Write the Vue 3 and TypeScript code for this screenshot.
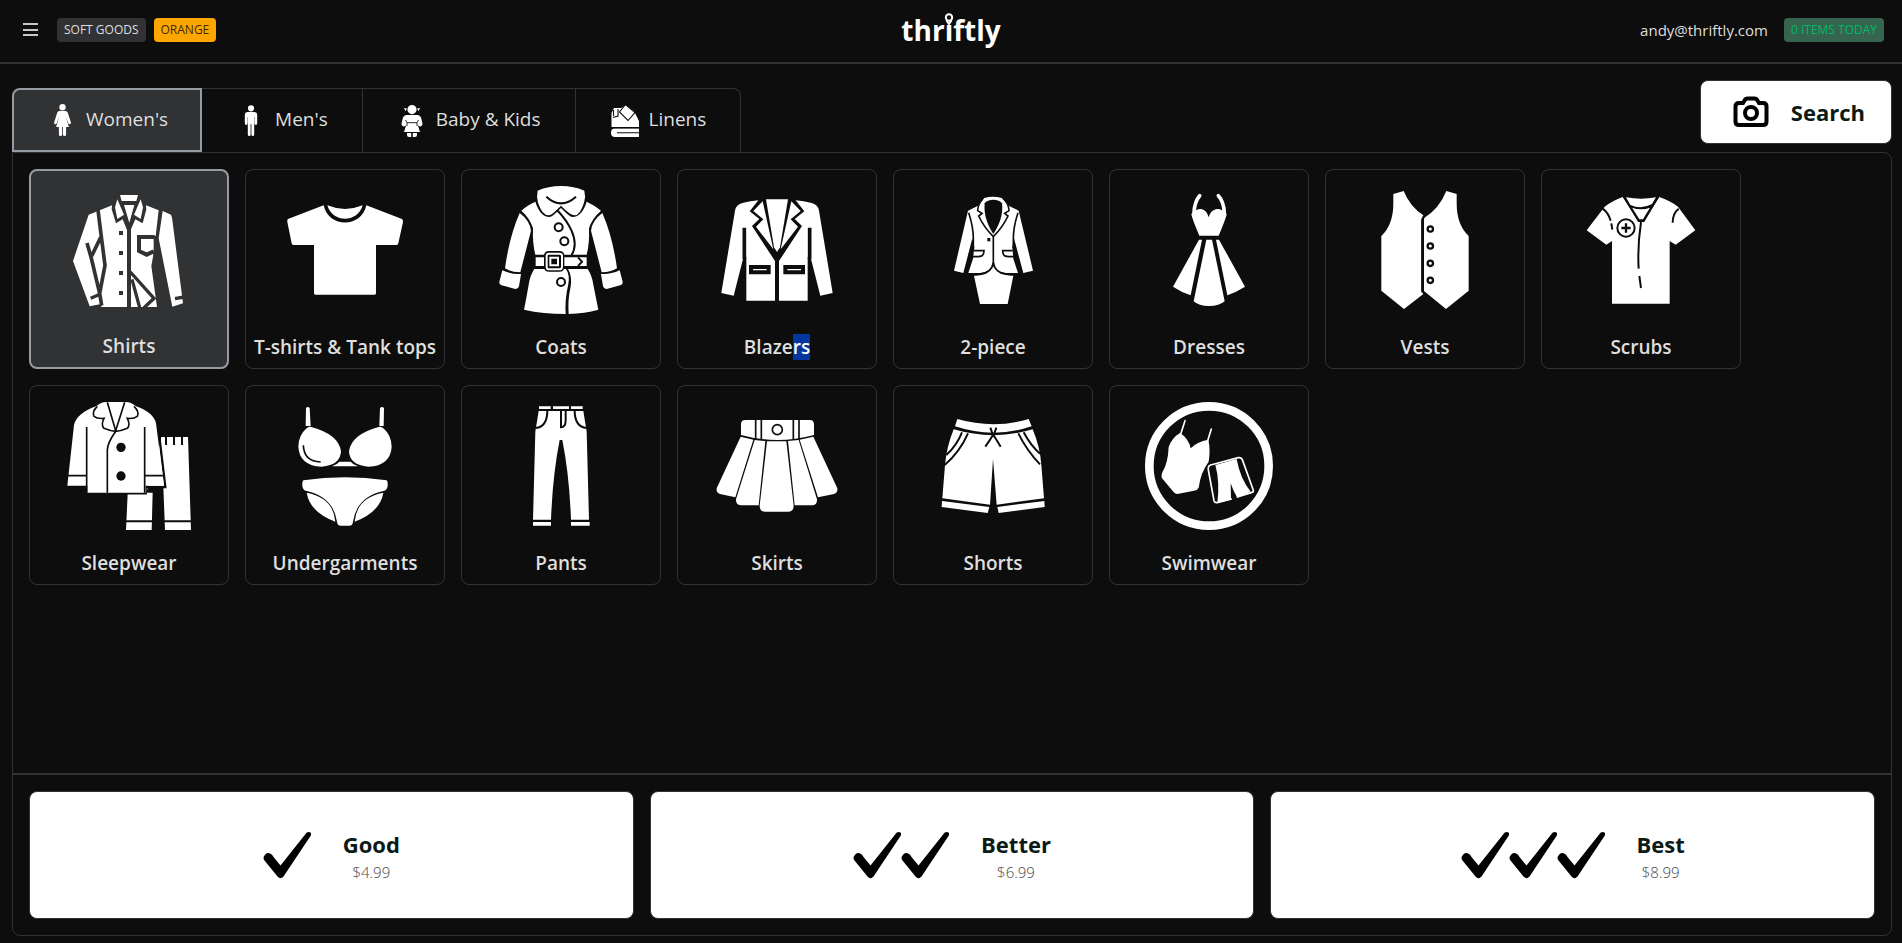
<script setup lang="ts">
import { ref } from 'vue'

type Kind = 'fill' | 'cut' | 'gap' | 'line'
interface Shape { k: Kind; d: string; w?: number }
interface Category { name: string; box: string; shapes: Shape[]; picked?: string }
interface Tab { name: string; shapes: Shape[] }
interface Grade { name: string; price: string; ticks: number }

const fill = (d: string): Shape => ({ k: 'fill', d })
const cut = (d: string): Shape => ({ k: 'cut', d })
const gap = (w: number, d: string): Shape => ({ k: 'gap', d, w })
const line = (w: number, d: string): Shape => ({ k: 'line', d, w })
const disc = (x: number, y: number, r: number) =>
  `M${x - r} ${y}a${r} ${r} 0 1 0 ${2 * r} 0a${r} ${r} 0 1 0 ${-2 * r} 0Z`

const tabs: Tab[] = [
  {
    name: "Women's",
    shapes: [
      fill(disc(16.5, 3.3, 3.2)),
      fill('M13.5 7H19.5Q21.3 7 21.9 9L24.9 18.4Q25.1 20 23.9 20.3Q22.8 20.4 22.3 19.2L19.7 12.6L22.9 23H10.1L13.3 12.6L10.7 19.2Q10.2 20.4 9.1 20.3Q7.9 20 8.1 18.4L11.1 9Q11.7 7 13.5 7Z'),
      fill('M12.9 23H16.1V30.5Q16.1 32 14.5 32T12.9 30.5ZM16.9 23H20.1V30.5Q20.1 32 18.5 32T16.9 30.5Z'),
    ],
  },
  {
    name: "Men's",
    shapes: [
      fill(disc(16, 3.3, 3.1)),
      fill('M13 7H19Q22.2 7 22.2 10V18Q22.2 20 20.8 20T19.5 18V12H19.2V29.5Q19.2 31 17.8 31T16.4 29.5V19H15.6V29.5Q15.6 31 14.2 31T12.8 29.5V12H12.5V18Q12.5 20 11.2 20T9.8 18V10Q9.8 7 13 7Z'),
    ],
  },
  {
    name: 'Baby & Kids',
    shapes: [
      fill(disc(16, 4.6, 4.6)),
      fill('M8 3L11 3.6L9.5 6.2ZM24 3L21 3.6L22.5 6.2Z'),
      fill('M10.5 10H21.5Q24 10 25 12.5L26.4 18Q26.8 21 24.4 21.4L22 20.6L24 27H8L10 20.6L7.6 21.4Q5.2 21 5.6 18L7 12.5Q8 10 10.5 10Z'),
      fill('M11 28H15.2V32H13Q11 32 11 30ZM16.8 28H21V30Q21 32 19 32H16.8Z'),
      gap(0.9, 'M9.5 15L11 17.5V21M22.5 15L21 17.5V21M11 17.7H21'),
    ],
  },
  {
    name: 'Linens',
    shapes: [
      fill('M2.5 8L5 3H12L17 0L25 6L30 16V22H2.5Z'),
      fill('M6 23.5H30V32H6Q2 32 2 27.7T6 23.5Z'),
      gap(1.1, 'M1 22.8H31M8 27.8H30M4 12.5L9 11V4M4.5 5V11M16.5 -0.5L26 7.5L19 15.5L10.5 7Z'),
    ],
  },
]

const categories: Category[] = [
  {
    name: 'Shirts',
    box: '165 78 384 384',
    shapes: [
      fill('M236 164L306 136H408L446 151L437 228L429 290L424 318L441 441H273L277 431L239 439L189 303Z'),
      fill('M458 153L483 164Q486 170 487 180L519 430L487 440L446 235Z'),
      cut('M306 136L322 114H392L408 136L409 148L398 190L376 178L363 208V441H351V210L338 178L318 190L305 148Z'),
      fill('M330 105H384L379 123H335ZM322 118L342 164L322 177L315 142ZM392 118L372 164L392 177L399 142ZM342 135H373L358 188Z'),
      gap(11, 'M264 150L274 230L285 316L269 400L275 437M231 249L244 295L269 400M245 288L272 232'),
      gap(10, 'M242 415L270 403M495 416L522 411'),
      cut('M327 213h12v12h-12ZM327 273h12v12h-12ZM327 333h12v12h-12ZM327 393h12v12h-12Z'),
      gap(12, 'M434 231H387V273L410 284L431 274'),
      gap(10, 'M436 228V290'),
      gap(10, 'M361 336L432 415L402 443M366 358L389 443'),
    ],
  },
  {
    name: 'T-shirts & Tank tops',
    box: '813 78 384 384',
    shapes: [
      fill('M941 136L834 177Q831 179 832 186L845 250Q846 255 850 255H912V400Q912 404 916 404H1094Q1098 404 1098 400V255H1160Q1164 255 1165 250L1179 186Q1179 179 1176 177L1069 136C1055 205 955 205 941 136Z'),
      fill('M952 136Q1005 158 1058 136C1042 190 968 190 952 136Z'),
    ],
  },
  {
    name: 'Coats',
    box: '141 78 384 384',
    shapes: [
      fill('M263 92Q295 78 333 78T403 92Q408 110 402 128Q390 166 374 166Q362 167 333 137Q304 167 297 166Q276 166 264 128Q259 110 263 92Z'),
      fill('M256 125Q270 170 298 171Q306 172 333 144Q360 172 368 171Q396 170 410 125Q436 137 453 152Q426 175 417 205Q419 250 410 284H256Q247 250 249 205Q240 175 214 152Q230 137 256 125Z'),
      fill('M209 159Q240 182 243 212L211 337Q184 337 165 325Q178 230 209 159ZM457 159Q426 182 423 212L455 337Q482 337 501 325Q488 230 457 159Z'),
      fill('M157 331Q185 344 213 342L207 379Q204 388 196 387L155 376Q147 374 148 365ZM509 331Q481 344 453 342L459 379Q462 388 470 387L511 376Q519 374 518 365Z'),
      fill('M257 292H410V318H257Z'),
      fill('M253 327H348Q360 345 355 372Q344 420 347 462Q280 462 222 449Q228 420 236 374Q240 346 253 327ZM354 327H413Q426 346 430 374L445 449Q404 460 356 462Q353 420 361 385Q368 350 354 327Z'),
      gap(6, 'M289 110Q333 150 378 110'),
      gap(6, 'M321 150C350 180 394 240 364 287'),
      cut('M282 288Q282 273 297 273H328Q343 273 343 288V320Q343 335 328 335H297Q282 335 282 320Z'),
      line(6, 'M290 288Q290 281 297 281H328Q336 281 336 288V320Q336 328 328 328H297Q290 328 290 320Z'),
      line(6, 'M301 293H324V316H301Z'),
      gap(6, 'M384 292L396 305L384 318'),
      gap(6, disc(326, 202, 12)),
      gap(6, disc(343, 244, 12)),
      gap(6, disc(333, 366, 12)),
    ],
  },
  {
    name: 'Blaze',
    picked: 'rs',
    box: '789 78 384 384',
    shapes: [
      fill('M925 121Q900 124 880 128Q858 132 855 152L814 399L851 407L879 297L889 290V422H975V303L906 198L928 177L899 154Z'),
      fill('M1037 121Q1062 124 1082 128Q1104 132 1107 152L1148 399L1111 407L1083 297L1073 290V422H987V303L1056 198L1034 177L1063 154Z'),
      fill('M948 118H1014L990 262L981 276L972 262Z'),
      fill('M938 124L970 268L918 200L940 178L910 153ZM1024 124L992 268L1044 200L1022 178L1052 153Z'),
      gap(11, 'M883 203V298M1079 203V298'),
      gap(12, 'M903 321H956V337H903ZM1006 321H1059V337H1006Z'),
    ],
  },
  {
    name: '2-piece',
    box: '147 78 384 384',
    shapes: [
      fill('M293 138L264 152L222 332L250 339L277 235L283 262L279 296L265 339H300Q332 336 339 310Q346 336 378 339H414L400 296L397 262L402 235L430 339L459 332L416 152L387 138L365 114Q340 106 313 114Z'),
      fill('M282 347Q320 350 340 319Q360 350 400 347L383 432H300Z'),
      cut('M314 130C322 116 358 116 366 130C370 165 358 195 340 222C322 195 311 165 314 130Z'),
      gap(5, 'M308 117Q294 132 293 152L306 160L296 168Q312 202 340 230Q368 202 384 168L374 160L387 152Q386 132 372 117M340 230V312'),
      gap(5, 'M266 158Q280 200 280 236V265M414 158Q400 200 400 236V265'),
      gap(5, 'M340 308Q334 340 303 342H262M340 308Q346 340 377 342H418'),
      gap(5, 'M282 272H312Q312 290 295 290H278M398 272H368Q368 290 385 290H402'),
      cut('M322 234h9v10h-9Z'),
    ],
  },
  {
    name: 'Dresses',
    box: '795 78 384 384',
    shapes: [
      line(11, 'M959 107Q943 125 942 160M1015 107Q1032 125 1033 160'),
      fill('M934 162Q950 145 964 147Q980 150 986 172Q992 150 1010 147Q1024 145 1040 162Q1038 175 1016 227H958Q936 175 934 162Z'),
      fill('M957 239H966L932 406Q905 397 879 380ZM979 239H996L1034 424Q1018 438 987 438T941 424ZM1008 239H1017L1095 380Q1068 397 1042 406Z'),
    ],
  },
  {
    name: 'Vests',
    box: '153 78 384 384',
    shapes: [
      fill('M250 102L281 93Q300 140 340 166L334 178V395L340 402L282 447L214 392V228Q250 195 250 130Z'),
      fill('M409 93L440 102V130Q440 195 476 228V392L408 447L342 393V174Q388 146 409 93Z'),
      gap(6, 'M344 168Q337 174 337 186V395'),
      gap(7, disc(361, 207, 8)),
      gap(7, disc(361, 258, 8)),
      gap(7, disc(361, 310, 8)),
      gap(7, disc(361, 361, 8)),
    ],
  },
  {
    name: 'Scrubs',
    box: '801 78 384 384',
    shapes: [
      fill('M938 111Q906 123 884 140L830 211L889 254L906 243V431H1079V243L1097 254L1156 211L1104 140Q1082 123 1048 111L1003 182H985Z'),
      fill('M948 112Q993 120 1038 112L1026 132Q993 150 960 134ZM966 143Q993 153 1020 143L999 178H988Z'),
      gap(6, 'M943 112L986 183H1001L1043 112'),
      gap(6, 'M993 186Q982 260 986 326M988 348L993 384'),
      gap(6, 'M878 146Q895 158 902 182M904 190L907 209M1106 146Q1088 160 1088 188'),
      gap(6, disc(948, 204, 26)),
      gap(7, 'M934 204H962M948 190V218'),
    ],
  },
  {
    name: 'Sleepwear',
    box: '165 81 384 384',
    shapes: [
      fill('M454 186H534L543 465H465L460 335H406V353H428L425 465H348L353 357H408Z'),
      gap(6, 'M468 186V210M492 186V210M516 186V210M346 439H428M462 439H545'),
      gap(7, 'M445 160L466 336H407V355H350'),
      fill('M258 94Q275 80 290 81H345Q362 80 378 94Q430 112 438 145L462 332H407V353H232V332H172L192 150Q200 115 258 94Z'),
      gap(5, 'M292 82L317 167L344 82M262 94Q245 110 252 124Q262 132 282 130Q272 150 282 160Q300 168 317 169Q334 168 352 160Q362 150 352 130Q372 132 382 124Q389 110 372 94M317 169Q292 205 292 225V353'),
      gap(5, 'M230 156V353M404 156V353M172 302H230M404 302H462'),
      cut(disc(333, 217, 14)),
      cut(disc(333, 303, 14)),
    ],
  },
  {
    name: 'Undergarments',
    box: '813 81 384 384',
    shapes: [
      fill('M888 99Q893 93 899 99L902 153H887ZM1110 99Q1116 93 1122 99L1121 153H1108Z'),
      fill('M890 160Q896 153 904 156Q985 178 993 228Q992 270 935 275Q868 272 865 215Q866 180 890 160ZM1120 160Q1114 153 1106 156Q1025 178 1017 228Q1018 270 1075 275Q1142 272 1145 215Q1144 180 1120 160Z'),
      fill('M988 260H1022Q1028 268 1044 274H966Q982 268 988 260Z'),
      gap(5, 'M880 211Q882 260 932 261'),
      fill('M880 316Q1005 298 1130 316Q1134 320 1133 332Q1132 345 1120 348Q1040 366 1029 440Q1028 452 1018 452H992Q982 452 981 440Q970 366 890 348Q878 345 877 332Q876 320 880 316Z'),
      fill('M890 353Q970 368 976 440Q900 412 890 353ZM1120 353Q1040 368 1034 440Q1110 412 1120 353Z'),
    ],
  },
  {
    name: 'Pants',
    box: '141 81 384 384',
    shapes: [
      fill('M267 94H302V102H267ZM309 94H357V102H309ZM363 94H398V102H363Z'),
      fill('M266 108H400L410 170L417 434H363Q358 300 337 195H329Q308 300 303 434H249L256 170Z'),
      fill('M249 441H303V452H249ZM363 441H419V452H363Z'),
      gap(6, 'M292 107Q292 155 257 159M374 107Q374 155 410 159M333 107V157Q347 157 347 135V107'),
    ],
  },
  {
    name: 'Skirts',
    box: '789 81 384 384',
    shapes: [
      fill('M886 135H1079Q1092 135 1092 148V180Q981 210 873 180V148Q873 135 886 135Z'),
      fill('M872 185L910 194L856 367L810 357Q798 352 800 340ZM1090 185L1049 194L1104 367L1152 357Q1164 352 1162 340Z'),
      fill('M914 195L946 198L926 391H872Q857 389 858 373ZM1046 195L1014 198L1034 391H1088Q1102 389 1101 373Z'),
      fill('M951 199H1009L1031 392Q1031 410 1014 410H946Q929 410 929 392Z'),
      gap(5, 'M917 134V192M934 134V194M1030 134V194M1047 134V192'),
      gap(5, disc(982, 164, 15)),
    ],
  },
  {
    name: 'Shorts',
    box: '147 81 384 384',
    shapes: [
      fill('M232 132Q340 163 446 132L455 154Q340 192 225 154Z'),
      fill('M221 163Q340 198 458 163Q480 215 484 270L492 370L350 389L339 252L330 389L187 370L195 270Q200 215 221 163Z'),
      fill('M186 378L328 396L323 414L185 396ZM493 378L352 396L356 414L494 396Z'),
      gap(6, 'M246 172Q230 212 199 240M264 175Q240 230 194 270M415 175Q440 226 480 268M431 172Q452 212 480 236'),
      gap(6, 'M331 158L338 178H342L349 158M339 180Q330 195 316 215M340 180Q350 195 362 215'),
    ],
  },
  {
    name: 'Swimwear',
    box: '795 81 384 384',
    shapes: [
      line(26, disc(987, 273, 179)),
      line(5, 'M915 137L902 178M994 162L982 200'),
      fill('M900 174Q926 190 932 220Q950 200 985 194Q992 225 986 260Q962 292 956 338Q952 346 942 347L892 357Q886 357 880 350L845 308Q843 302 847 292Q864 265 866 216Q876 188 900 174Z'),
      fill('M1006 270L1070 252Q1080 310 1112 350L1072 368Q1058 345 1052 325L1053 374L1012 384Q1020 320 1006 270Z'),
      line(5, 'M992 270L1075 248Q1084 246 1087 254L1120 346Q1121 351 1114 353L1072 366M1054 372L1012 383Q1004 384 1002 377L985 285Q983 273 992 270'),
    ],
  },
]

const grades: Grade[] = [
  { name: 'Good', price: '$4.99', ticks: 1 },
  { name: 'Better', price: '$6.99', ticks: 2 },
  { name: 'Best', price: '$8.99', ticks: 3 },
]

const activeTab = ref(0)
const activeCategory = ref(0)
</script>

<template>
  <div class="page">
    <header class="bar">
      <div class="side">
        <button class="menu" type="button" aria-label="Menu">
          <svg viewBox="0 0 16 16"><path d="M0 2H15M0 8H15M0 13H15" /></svg>
        </button>
        <span class="tag">SOFT GOODS</span>
        <span class="tag orange">ORANGE</span>
      </div>
      <div class="logo">
        <span>thr<span class="pinned">i<svg class="pin" viewBox="0 0 12 14"><rect width="12" height="10" class="back" /><circle cx="6" cy="4.5" r="3.2" /><path d="M3.4 7.2L6 11L8.6 7.2" /></svg></span>ftly</span>
      </div>
      <div class="side end">
        <span class="mail">andy@thriftly.com</span>
        <span class="tag green">0 ITEMS TODAY</span>
      </div>
    </header>

    <main>
      <div class="top">
        <nav class="tabs">
          <button
            v-for="(tab, i) in tabs"
            :key="tab.name"
            type="button"
            class="tab"
            :class="{ active: i === activeTab }"
            @click="activeTab = i"
          >
            <svg class="art" viewBox="0 0 32 32">
              <path v-for="(s, n) in tab.shapes" :key="n" :class="s.k" :d="s.d" :stroke-width="s.w" />
            </svg>
            <span class="caption">{{ tab.name }}</span>
          </button>
        </nav>
        <button class="search" type="button">
          <svg viewBox="0 0 36 32">
            <path d="M11.5 4.5Q12.5 2.5 14.5 2.5H21.5Q23.5 2.5 24.5 4.5L26 7H30Q33.5 7 33.5 10.5V25.5Q33.5 29 30 29H6Q2.5 29 2.5 25.5V10.5Q2.5 7 6 7H10Z" />
            <circle cx="18" cy="17" r="6" />
          </svg>
          <span>Search</span>
        </button>
      </div>

      <section class="panel">
        <div class="grid">
          <button
            v-for="(c, i) in categories"
            :key="c.name"
            type="button"
            class="card"
            :class="{ active: i === activeCategory }"
            @click="activeCategory = i"
          >
            <svg class="art" :viewBox="c.box">
              <path v-for="(s, n) in c.shapes" :key="n" :class="s.k" :d="s.d" :stroke-width="s.w" />
            </svg>
            <span>{{ c.name }}<mark v-if="c.picked">{{ c.picked }}</mark></span>
          </button>
        </div>
        <footer class="grades">
          <button v-for="g in grades" :key="g.name" type="button" class="grade">
            <span class="ticks">
              <svg v-for="n in g.ticks" :key="n" viewBox="0 0 48 48">
                <path d="M1.5 24.5Q4 20.5 8 23Q9.5 24 10.5 26L17.5 34.5L43.5 1.8Q46 0.2 48 2Q48.6 3 47.5 5L20.5 45.5Q17.5 48.8 14.5 45.5L1.5 29.5Q-0.5 27 1.5 24.5Z" />
              </svg>
            </span>
            <span class="words">
              <strong>{{ g.name }}</strong>
              <small>{{ g.price }}</small>
            </span>
          </button>
        </footer>
      </section>
    </main>
  </div>
</template>

<style>
body {
  background: #0d0d0d;
}
</style>

<style scoped>
.page {
  --ink: #0d0d0d;
  --edge: #313234;
  display: flex;
  flex-direction: column;
  box-sizing: border-box;
  min-height: 100vh;
  background: var(--ink);
  color: #dfdfdf;
  font-family: "Open Sans", "Noto Sans", sans-serif;
}

button {
  box-sizing: border-box;
  margin: 0;
  padding: 0;
  border: 0;
  background: none;
  color: inherit;
  font: inherit;
  cursor: pointer;
}

.bar {
  display: flex;
  align-items: center;
  box-sizing: border-box;
  height: 64px;
  padding: 0 18px 2px;
  border-bottom: 2px solid var(--edge);
}

.side {
  display: flex;
  flex: 1;
  align-items: center;
  gap: 8px;
}

.side.end {
  justify-content: flex-end;
  gap: 16px;
}

.menu {
  width: 26px;
  height: 26px;
  margin-right: 5px;
  padding: 5px;
}

.menu svg {
  display: block;
  fill: none;
  stroke: #c8c8c8;
  stroke-width: 2;
}

.tag {
  padding: 0 7px;
  border-radius: 4px;
  background: var(--edge);
  font-size: 12px;
  line-height: 24px;
}

.tag.orange {
  background: #ffa500;
  color: #3b2c08;
}

.tag.green {
  background: #35654f;
  color: #00b965;
}

.mail {
  font-size: 15px;
}

.logo {
  color: #fff;
  font-size: 28px;
  font-weight: 700;
  line-height: 40px;
}

.pinned {
  position: relative;
}

.pin {
  position: absolute;
  top: 2px;
  left: -2px;
  width: 12px;
  height: 14px;
  fill: none;
  stroke: #fff;
  stroke-width: 2;
}

.pin .back {
  fill: var(--ink);
  stroke: none;
}

main {
  display: flex;
  flex: 1;
  flex-direction: column;
  padding: 16px 10px 7px 12px;
}

.top {
  display: flex;
  align-items: flex-end;
  justify-content: space-between;
}

.tabs {
  display: flex;
}

.tab {
  display: flex;
  align-items: center;
  gap: 8px;
  height: 64px;
  padding: 0 34px 0 33px;
  border: 1px solid var(--edge);
  border-width: 1px 1px 0 0;
  font-size: 19px;
}

.tab:first-child {
  border-top-left-radius: 8px;
}

.tab:last-child {
  border-top-right-radius: 8px;
}

.tab.active {
  padding: 0 32px;
  border: 2px solid #959ca3;
  background: var(--edge);
}

.tab .art {
  width: 32px;
  height: 32px;
}

.caption {
  padding-bottom: 3px;
}

.art {
  flex: none;
  overflow: visible;
}

.fill {
  fill: #fff;
}

.cut {
  fill: var(--ink);
}

.gap {
  fill: none;
  stroke: var(--ink);
}

.line {
  fill: none;
  stroke: #fff;
  stroke-linecap: round;
}

.active {
  --ink: #313234;
}

.search,
.grade {
  display: flex;
  align-items: center;
  justify-content: center;
  gap: 32px;
  border: 1px solid var(--edge);
  border-radius: 8px;
  background: #fff;
  color: #0b1a15;
}

.search {
  height: 64px;
  margin-bottom: 8px;
  gap: 22px;
  padding: 0 26px 0 32px;
  font-size: 22px;
  font-weight: 700;
}

.search svg {
  width: 36px;
  height: 32px;
  fill: none;
  stroke: #000;
  stroke-width: 4;
}

.panel {
  display: flex;
  flex: 1;
  flex-direction: column;
  border: 1px solid var(--edge);
  border-radius: 0 8px 8px 8px;
}

.grid {
  display: flex;
  flex: 1;
  flex-wrap: wrap;
  align-content: flex-start;
  gap: 16px;
  padding: 16px;
}

.card {
  display: flex;
  flex-direction: column;
  align-items: center;
  gap: 19px;
  width: 200px;
  height: 200px;
  padding-top: 16px;
  border: 1px solid var(--edge);
  border-radius: 8px;
  font-size: 19px;
  font-weight: 600;
  line-height: 28px;
  white-space: nowrap;
}

.card.active {
  gap: 18px;
  padding-top: 15px;
  border: 2px solid #959ca3;
  background: var(--edge);
}

.card .art {
  width: 128px;
  height: 128px;
}

mark {
  background: #0536a0;
  color: #fff;
}

.grades {
  display: flex;
  gap: 16px;
  padding: 16px;
  border-top: 2px solid var(--edge);
}

.grade {
  flex: 1;
  height: 128px;
}

.ticks {
  display: flex;
}

.ticks svg {
  width: 48px;
  height: 48px;
}

.words {
  display: flex;
  flex-direction: column;
  align-items: center;
  padding-top: 2px;
}

.words strong {
  font-size: 22px;
  line-height: 32px;
}

.words small {
  color: #4a4a4a;
  font-size: 15px;
  font-weight: 300;
  line-height: 24px;
}
</style>
